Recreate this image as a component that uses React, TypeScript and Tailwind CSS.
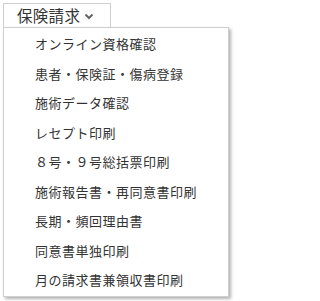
import React from 'react';

const items = [
  'オンライン資格確認',
  '患者・保険証・傷病登録',
  '施術データ確認',
  'レセプト印刷',
  '８号・９号総括票印刷',
  '施術報告書・再同意書印刷',
  '長期・頻回理由書',
  '同意書単独印刷',
  '月の請求書兼領収書印刷',
];

export default function App() {
  return (
    <div
      className="min-h-screen bg-white pt-[3px] pl-[3px] text-[#333]"
      style={{ fontFamily: '"Noto Sans CJK JP", "Noto Sans", sans-serif' }}
    >
      {/* menu trigger */}
      <button className="flex h-[24px] w-[108px] items-center border border-b-0 border-[#cfcfcf] bg-white pl-[13px]">
        <span className="text-[15.5px] leading-none tracking-[0.3px]">保険請求</span>
        <svg className="ml-[4px] mt-[2px]" width="10" height="7" viewBox="0 0 10 7">
          <path d="M1.5 1.5 L5 5 L8.5 1.5" fill="none" stroke="#666" strokeWidth="2" />
        </svg>
      </button>

      {/* dropdown */}
      <ul className="w-[226px] border border-[#cfcfcf] bg-white py-[1px] shadow-[2px_2px_3px_rgba(0,0,0,0.3)]">
        {items.map((label) => (
          <li
            key={label}
            className="flex h-[29.5px] items-center pl-[31px] text-[13px] leading-none tracking-[0.5px] whitespace-nowrap"
          >
            {label}
          </li>
        ))}
      </ul>
    </div>
  );
}
